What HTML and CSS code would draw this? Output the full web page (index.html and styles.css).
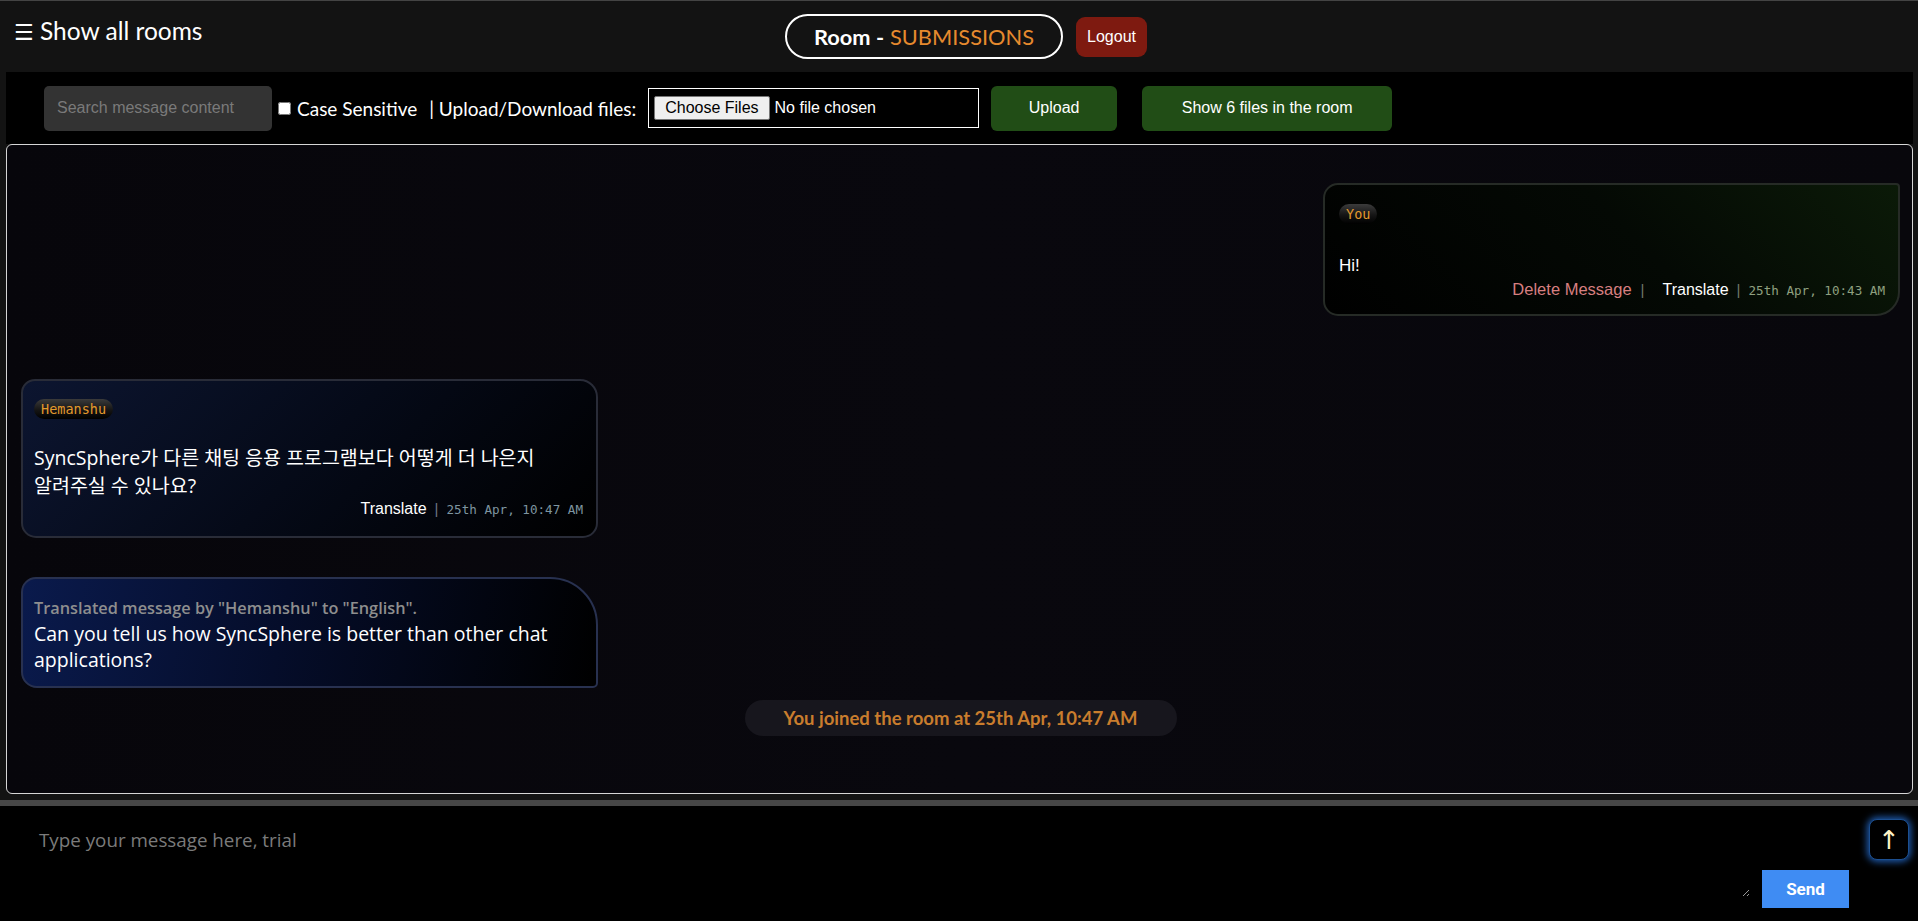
FILE: index.html
```html
<!DOCTYPE html>
<html lang="en">
<head>
<meta charset="utf-8">
<title>SyncSphere - Room SUBMISSIONS</title>
<link rel="stylesheet" href="styles.css">
</head>
<body>
<div class="app">
  <header class="topbar">
    <div class="rooms-toggle"><span class="burger">☰</span> Show all rooms</div>
    <div class="room-group">
      <div class="room-pill"><b>Room -</b> <span class="room-name">SUBMISSIONS</span></div>
      <button class="logout">Logout</button>
    </div>
    <div></div>
  </header>

  <div class="toolbar">
    <input class="search" type="text" placeholder="Search message content">
    <label class="case"><input type="checkbox"> Case Sensitive</label>
    <span class="upload-label">| Upload/Download files:</span>
    <div class="file-box"><input class="file" type="file" multiple></div>
    <button class="green-btn upload">Upload</button>
    <button class="green-btn show-files">Show 6 files in the room</button>
  </div>

  <main class="chat">
    <div class="msg msg-you">
      <span class="badge">You</span>
      <div class="msg-text">Hi!</div>
      <div class="meta">
        <span class="delete">Delete Message</span><span class="sep sep-wide">|</span>
        <span class="translate">Translate</span><span class="sep">|</span>
        <span class="time">25th Apr, 10:43 AM</span>
      </div>
    </div>

    <div class="msg msg-other">
      <span class="badge">Hemanshu</span>
      <div class="msg-text ko">SyncSphere가 다른 채팅 응용 프로그램보다 어떻게 더 나은지 알려주실 수 있나요?</div>
      <div class="meta">
        <span class="translate">Translate</span><span class="sep">|</span>
        <span class="time time-blue">25th Apr, 10:47 AM</span>
      </div>
    </div>

    <div class="msg msg-translated">
      <div class="tr-label">Translated message by "Hemanshu" to "English".</div>
      <div class="msg-text">Can you tell us how SyncSphere is better than other chat applications?</div>
    </div>

    <div class="notice">You joined the room at 25th Apr, 10:47 AM</div>
  </main>

  <footer class="composer">
    <textarea class="input" placeholder="Type your message here, trial"></textarea>
    <button class="send">Send</button>
    <button class="scroll-btn">↑</button>
  </footer>
</div>
</body>
</html>
```

FILE: styles.css
```css
* { box-sizing: border-box; }

html, body {
  margin: 0;
  height: 100%;
  background: #131313;
  overflow: hidden;
}

.app {
  display: flex;
  flex-direction: column;
  height: 921px;
  font-family: Lato, "Noto Sans", sans-serif;
  color: #fff;
}

/* ---------- top bar ---------- */
.topbar {
  height: 72px;
  border-top: 1px solid #444;
  display: grid;
  grid-template-columns: 1fr auto 1fr;
  align-items: center;
  flex: none;
}

.rooms-toggle {
  padding-left: 14px;
  font-size: 24.5px;
  align-self: start;
  padding-top: 15px;
  white-space: nowrap;
}

.burger {
  font-family: "DejaVu Sans", sans-serif;
  font-size: 22px;
}

.room-group {
  display: flex;
  align-items: center;
  gap: 13px;
  padding-left: 14px;
}

.room-pill {
  height: 45px;
  width: 278px;
  border: 2px solid #fff;
  border-radius: 23px;
  display: flex;
  align-items: center;
  justify-content: center;
  gap: 6px;
  font-size: 21.8px;
}

.room-pill b { font-weight: 700; }

.room-name { color: #e68a2e; }

.logout {
  height: 40px;
  width: 71px;
  border: none;
  border-radius: 9px;
  background: #7e1a10;
  color: #fff;
  font-family: "Liberation Sans", Arial, sans-serif;
  font-size: 16px;
  padding: 0;
}

/* ---------- toolbar ---------- */
.toolbar {
  height: 72px;
  margin: 0 5px 0 6px;
  background: #000;
  display: flex;
  align-items: center;
  padding-left: 38px;
  flex: none;
}

.search {
  width: 228px;
  height: 45px;
  background: #333;
  border: none;
  border-radius: 5px;
  padding: 0 13px;
  color: #ddd;
  font-family: "Liberation Sans", Arial, sans-serif;
  font-size: 16px;
  outline: none;
}
.search::placeholder { color: #7a7a7a; }

.case {
  display: flex;
  align-items: center;
  margin-left: 6px;
  font-size: 19px;
  white-space: nowrap;
}
.case input {
  margin: 0 6px 0 0;
  width: 13px;
  height: 13px;
}

.upload-label {
  margin-left: 12px;
  font-size: 19px;
  white-space: nowrap;
}

.file-box {
  margin-left: 12px;
  width: 331px;
  height: 40px;
  border: 1px solid #fff;
  display: flex;
  align-items: center;
  padding-left: 5px;
}

.file {
  color: #fff;
  font-family: "Liberation Sans", Arial, sans-serif;
  font-size: 16px;
}
.file::file-selector-button {
  font-family: "Liberation Sans", Arial, sans-serif;
  font-size: 16px;
  background: #efefef;
  border: 1px solid #767676;
  border-radius: 2px;
  padding: 2px 10px;
  margin-right: 5px;
  color: #000;
}

.green-btn {
  height: 45px;
  background: #214d16;
  border: none;
  border-radius: 6px;
  color: #fff;
  font-family: "Liberation Sans", Arial, sans-serif;
  font-size: 16px;
}
.upload { width: 126px; margin-left: 12px; }
.show-files { width: 250px; margin-left: 25px; }

/* ---------- chat area ---------- */
.chat {
  height: 650px;
  margin: 0 5px 0 6px;
  border: 1px solid #d6d6d6;
  border-radius: 6px;
  background: linear-gradient(90deg, #07060b, #09080e 50%, #08070c);
  display: flex;
  flex-direction: column;
  padding: 38px 12px 0 14px;
  flex: none;
}

.msg {
  width: 577px;
  border: 2px solid #2a2d33;
  position: relative;
}

.msg-you {
  align-self: flex-end;
  border-color: #262b26;
  border-radius: 15px 4px 24px 15px;
  background: linear-gradient(225deg, #0b1a08 0%, #040904 45%, #000 100%);
  padding: 18px 13px 15px 14px;
}

.msg-other {
  margin-top: 63px;
  border-color: #292c38;
  border-radius: 14px 18px 15px 15px;
  background: linear-gradient(135deg, #0c1530 0%, #050a18 50%, #000 100%);
  padding: 17px 13px 17px 11px;
}

.msg-translated {
  margin-top: 39px;
  border-color: #283150;
  border-radius: 15px 48px 5px 16px;
  background: linear-gradient(100deg, #0a1a4c 0%, #050d2a 45%, #000 100%);
  padding: 18px 13px 13px 11px;
}

.badge {
  display: inline-block;
  height: 20px;
  padding: 0 7px;
  border-radius: 10px;
  background: linear-gradient(180deg, #3b3b3b 0%, #151515 55%, #000 100%);
  color: #e49a2c;
  font-family: "DejaVu Sans Mono", monospace;
  font-size: 13.5px;
  line-height: 20px;
}

.msg-text {
  margin-top: 25px;
  font-family: "Open Sans", "Noto Sans CJK KR", sans-serif;
  font-size: 19.5px;
  line-height: 28px;
  color: #fff;
  max-width: 545px;
  word-break: keep-all;
}
.msg-you .msg-text {
  font-family: "Liberation Sans", Arial, sans-serif;
  font-size: 17px;
  margin-top: 28px;
}
.msg-translated .msg-text {
  margin-top: 2px;
  line-height: 26px;
}

.tr-label {
  font-family: "Open Sans", sans-serif;
  font-weight: 600;
  font-size: 16.3px;
  color: #8e8e8e;
  line-height: 22px;
}

.meta {
  display: flex;
  justify-content: flex-end;
  align-items: baseline;
  height: 19px;
  font-family: "Liberation Sans", Arial, sans-serif;
  font-size: 16px;
  white-space: nowrap;
}
.delete { color: #d77f80; font-size: 16.5px; }
.translate { color: #fff; }
.sep { color: #6f7a6a; margin: 0 8px 0 8px; font-size: 15px; }
.sep-wide { margin: 0 18px 0 9px; }
.time {
  font-family: "DejaVu Sans Mono", monospace;
  font-size: 12.6px;
  color: #8fa080;
}
.time-blue { color: #7e95a0; }
.msg-other .sep { color: #6c7682; }

.notice {
  align-self: center;
  margin-top: 12px;
  width: 432px;
  height: 36px;
  border-radius: 18px;
  background: #17161d;
  color: #c97d2d;
  font-weight: 700;
  font-size: 18.5px;
  display: flex;
  align-items: center;
  justify-content: center;
}

/* ---------- composer ---------- */
.composer {
  margin-top: 6px;
  border-top: 6px solid #474747;
  flex: 1;
  background: #000;
  display: flex;
  align-items: flex-start;
  position: relative;
  padding-right: 69px;
}

.input {
  flex: 1;
  height: 91px;
  background: #000;
  border: none;
  outline: none;
  resize: both;
  padding: 20px 39px;
  color: #ddd;
  font-family: "Open Sans", sans-serif;
  font-size: 18.8px;
  line-height: 28px;
  color-scheme: dark;
}
.input::placeholder { color: #7b7b7b; }

.send {
  margin-top: 64px;
  margin-left: 12px;
  width: 87px;
  height: 38px;
  border: none;
  background: #3f8cf3;
  color: #fff;
  font-family: Roboto, sans-serif;
  font-weight: 700;
  font-size: 17px;
}

.scroll-btn {
  position: absolute;
  left: 1869px;
  top: 13px;
  width: 40px;
  height: 41px;
  border-radius: 8px;
  border: 1px solid #1c4f90;
  background: #000;
  color: #fff4c8;
  font-family: "DejaVu Sans", sans-serif;
  font-size: 26px;
  line-height: 1;
  padding: 0;
  box-shadow: 0 0 7px 2px rgba(40, 120, 230, 0.75);
}
```
